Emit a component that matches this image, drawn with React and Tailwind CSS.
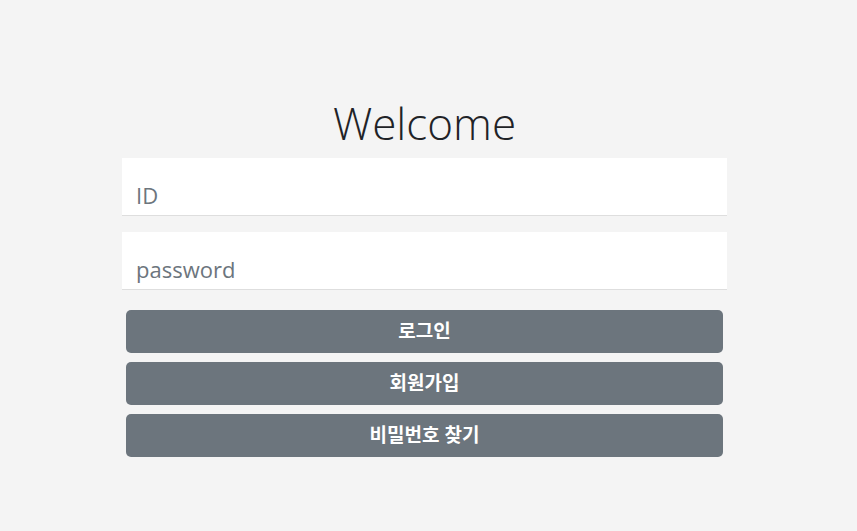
function Field({ placeholder, type }) {
  return (
    <input
      type={type}
      placeholder={placeholder}
      className="block w-full h-[58px] bg-white border-b border-[#dedede] px-[14px] pt-[16px] text-[22px] text-[#495057] placeholder:text-[#6c757d] outline-none"
      style={{ fontFamily: '"Open Sans", "Noto Sans CJK KR", sans-serif' }}
    />
  );
}

function Button({ children }) {
  return (
    <button className="mx-1 h-[43px] rounded-[5px] bg-[#6c757d] text-white text-[19px] font-bold">
      {children}
    </button>
  );
}

function App() {
  return (
    <div
      className="min-h-screen bg-[#f4f4f4] pt-[96px]"
      style={{ fontFamily: '"Open Sans", "Noto Sans CJK KR", sans-serif' }}
    >
      <div className="ml-[122px] w-[605px]">
        <h1 className="text-center text-[44px] font-light leading-[54px] text-[#1f2327] mb-[8px]">
          Welcome
        </h1>
        <div className="flex flex-col">
          <Field placeholder="ID" type="text" />
          <div className="h-[16px]" />
          <Field placeholder="password" type="password" />
          <div className="mt-[20px] flex flex-col gap-[9px]">
            <Button>로그인</Button>
            <Button>회원가입</Button>
            <Button>비밀번호 찾기</Button>
          </div>
        </div>
      </div>
    </div>
  );
}

export default App;
